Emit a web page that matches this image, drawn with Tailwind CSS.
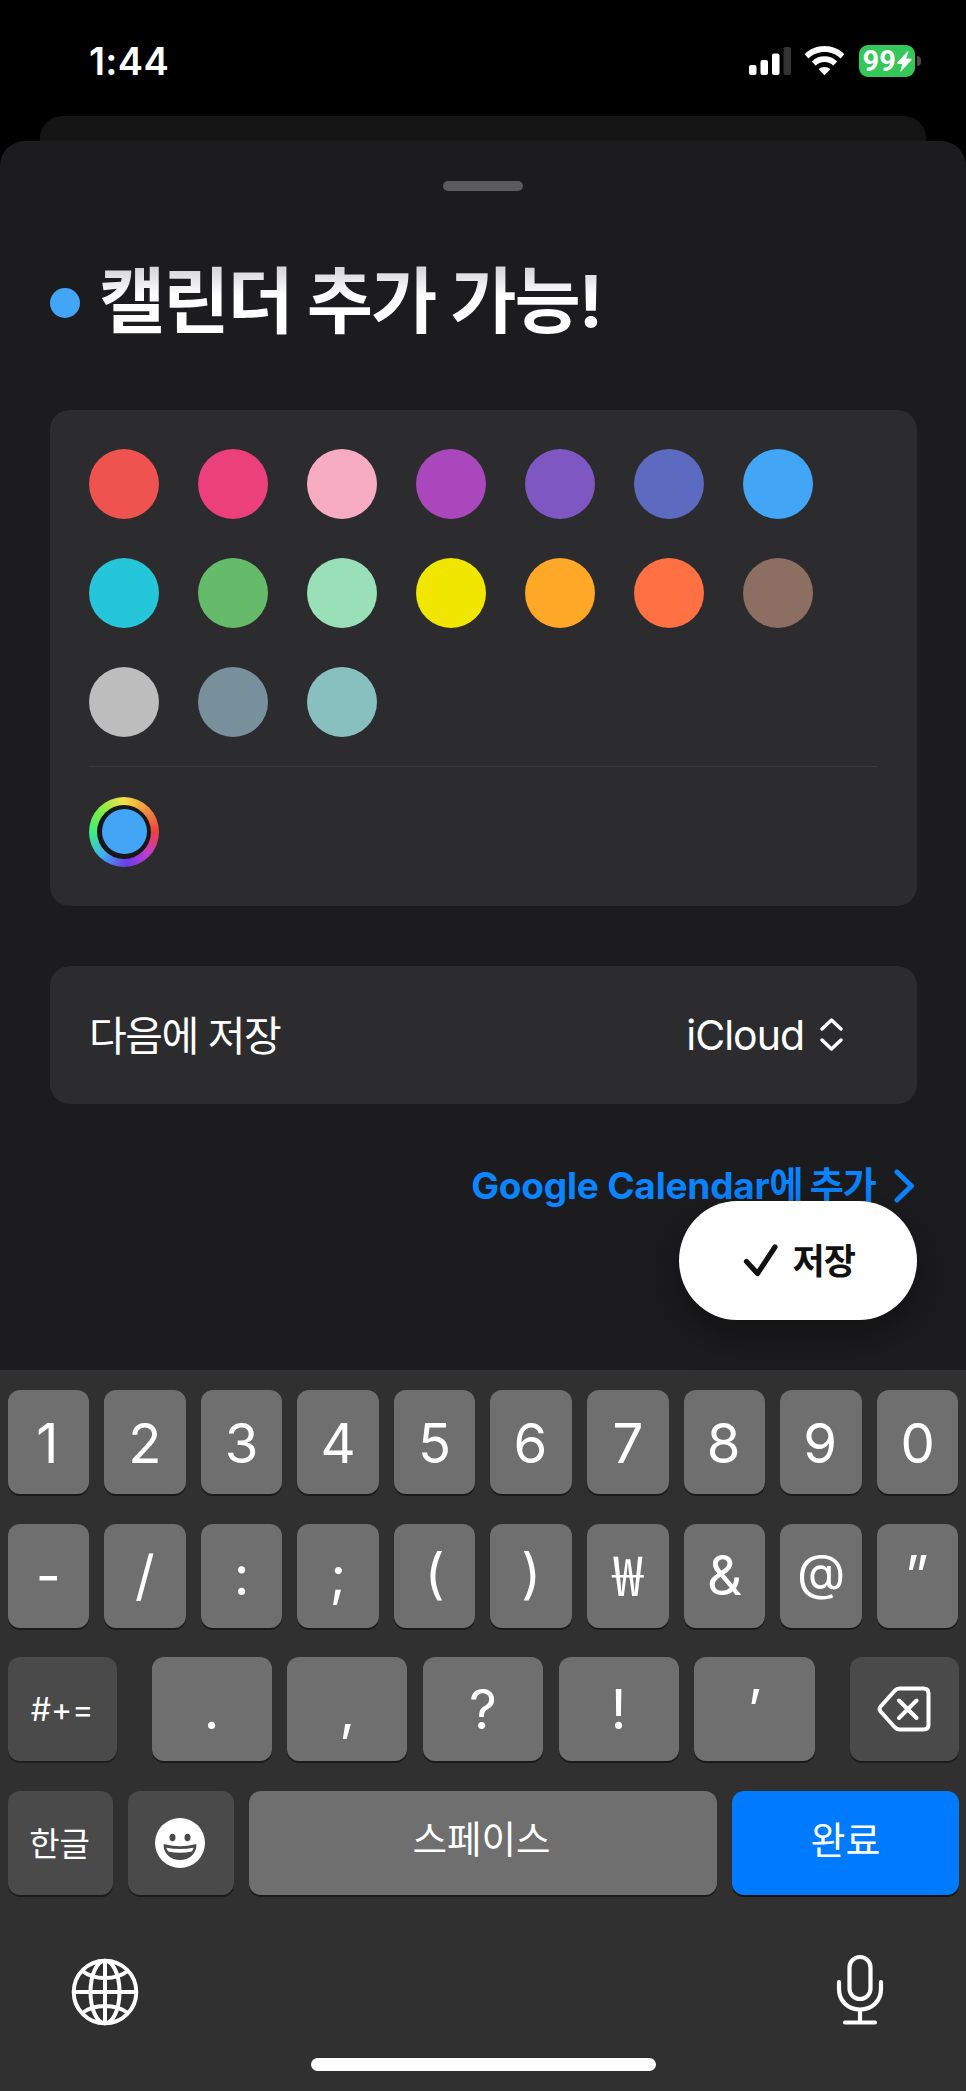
<!DOCTYPE html>
<html lang="ko">
<head>
<meta charset="utf-8">
<title>캘린더 추가</title>
<script src="https://cdn.jsdelivr.net/npm/@tailwindcss/browser@4"></script>
</head>
<body class="bg-black">
<div class="flex h-[2091px] w-[966px] flex-col overflow-hidden bg-black font-[Inter,'Noto_Sans_CJK_KR',sans-serif] text-white">

  <!-- Status bar -->
  <header class="flex h-[116px] shrink-0 items-start justify-between pr-[45px] pl-[89px]">
    <span class="mt-[43px] text-[38px] leading-[37px] font-semibold tracking-[0.3px]">1:44</span>
    <div class="mt-[45px] flex h-8 items-start">
      <svg class="mt-px h-[30px] w-[43px]" viewBox="0 0 43 30">
        <rect x="0" y="19" width="7.500" height="10" rx="2" fill="#fff"/>
        <rect x="11.500" y="14" width="7.500" height="15" rx="2" fill="#fff"/>
        <rect x="23" y="7.500" width="7.500" height="21.500" rx="2" fill="#fff"/>
        <rect x="34.500" y="1" width="7.500" height="28" rx="2" fill="#333"/>
      </svg>
      <svg class="mt-px mr-px ml-[12px] h-[30px] w-[41px]" viewBox="0 0 41 30">
        <path d="M20.500 0C28.400 0 35.300 3 40.300 8.200L36.600 12.400C32.300 8.200 26.800 5.900 20.500 5.900S8.700 8.200 4.400 12.400L.7 8.200C5.700 3 12.600 0 20.500 0Z" fill="#fff"/>
        <path d="M20.500 10.300C25.500 10.300 29.900 12.200 33.200 15.500L29.300 19.700C26.900 17.500 23.900 16.100 20.500 16.100S14.100 17.500 11.700 19.700L7.800 15.500C11.100 12.200 15.500 10.300 20.500 10.300Z" fill="#fff"/>
        <path d="M20.500 20.900C22.700 20.900 24.800 21.700 26.400 23.200L20.500 29.300L14.600 23.200C16.200 21.700 18.300 20.900 20.500 20.900Z" fill="#fff"/>
      </svg>
      <div class="ml-[13px] flex h-8 w-[56px] items-center rounded-[9px] bg-[#34c759] pl-[4px]">
        <span class="w-[34px] shrink-0 font-[Roboto] text-[29px] leading-[29px] font-bold">99</span>
        <svg class="h-[21px] w-[15px] shrink-0" viewBox="0 0 15 21" stroke="#fff" stroke-width="0.800"><path d="M11 .5L.7 11.300Q0 12.500 1.200 12.500H5.800L3.700 20.300L14 9.200Q14.800 8 13.500 8H8.700Z" fill="#fff"/></svg>
      </div>
      <div class="mt-[11px] ml-[2.500px] h-[10px] w-[4px] rounded-r-full bg-[#4a4a4a]"></div>
    </div>
  </header>
  <div class="mx-10 h-[25px] shrink-0 rounded-t-[22px] bg-[#141414]"></div>

  <!-- Sheet -->
  <main class="flex h-[1229px] shrink-0 flex-col rounded-t-[25px] bg-[#1c1c1e] px-[49.500px]">
    <div class="mt-10 h-[10px] w-20 shrink-0 self-center rounded-full bg-[#5b5b5f]"></div>

    <div class="mt-[64px] flex h-[96px] shrink-0 items-center">
      <div class="h-[30px] w-[30px] rounded-full bg-[#42a5f5]"></div>
      <h1 class="mb-[5px] ml-[19.500px] bg-linear-to-b from-[#d8d8da] from-15% to-white to-45% bg-clip-text text-[72px] leading-[90px] font-bold tracking-[-2px] text-transparent">캘린더 추가 가능!</h1>
    </div>

    <section class="mt-[58.500px] flex h-[496px] shrink-0 flex-col rounded-[20px] bg-[#2c2c2e] px-[39.500px] pt-[39px]">
      <div class="grid grid-cols-[repeat(7,70px)] gap-[39px]">
        <div class="h-[70px] rounded-full bg-[#ef5350]"></div>
        <div class="h-[70px] rounded-full bg-[#ec407a]"></div>
        <div class="h-[70px] rounded-full bg-[#f8acc4]"></div>
        <div class="h-[70px] rounded-full bg-[#ab47bc]"></div>
        <div class="h-[70px] rounded-full bg-[#7e57c2]"></div>
        <div class="h-[70px] rounded-full bg-[#5c6bc0]"></div>
        <div class="h-[70px] rounded-full bg-[#42a5f5]"></div>
        <div class="h-[70px] rounded-full bg-[#26c6da]"></div>
        <div class="h-[70px] rounded-full bg-[#66bb6a]"></div>
        <div class="h-[70px] rounded-full bg-[#99e0b9]"></div>
        <div class="h-[70px] rounded-full bg-[#f0e600]"></div>
        <div class="h-[70px] rounded-full bg-[#ffa726]"></div>
        <div class="h-[70px] rounded-full bg-[#ff7043]"></div>
        <div class="h-[70px] rounded-full bg-[#8d6e63]"></div>
        <div class="h-[70px] rounded-full bg-[#bdbdbd]"></div>
        <div class="h-[70px] rounded-full bg-[#78909c]"></div>
        <div class="h-[70px] rounded-full bg-[#88c0c0]"></div>
      </div>
      <div class="mt-[29px] h-[1.500px] bg-[#3a3a3d]"></div>
      <div class="mt-[29.500px] flex h-[70px] w-[70px] items-center justify-center rounded-full bg-[conic-gradient(#f5e04a,#f0953c_12%,#ee4040_25%,#c03bd0_37%,#6a3de8_49%,#40b0f0_62%,#3fee80_75%,#80ee40_87%,#f5e04a)]">
        <div class="flex h-[54px] w-[54px] items-center justify-center rounded-full bg-[#18181a]">
          <div class="h-[45px] w-[45px] rounded-full bg-[#42a5f5]"></div>
        </div>
      </div>
    </section>

    <section class="mt-[60px] flex h-[138px] shrink-0 items-center justify-between rounded-[20px] bg-[#2c2c2e] pr-[73.500px] pl-[39.500px]">
      <span class="mt-[2px] text-[41px] leading-[50px] tracking-[-1.500px]">다음에 저장</span>
      <span class="flex items-center text-[41px] leading-[50px] tracking-[-1px]">iCloud
        <svg class="ml-[16px] h-[33px] w-[23px]" viewBox="0 0 23 33" fill="none" stroke="#fff" stroke-width="3.400" stroke-linecap="round" stroke-linejoin="round"><path d="M2 11L11.500 2L21 11M2 22L11.500 31L21 22"/></svg>
      </span>
    </section>

    <div class="mt-[59px] flex h-[46px] shrink-0 items-center justify-end text-[#0a84ff]">
      <span class="text-[37px] leading-[46px] font-bold tracking-[-0.200px]">Google Calendar<span class="tracking-[-1.200px]">에 추가</span></span>
      <svg class="mr-[2px] ml-[18px] h-[34px] w-[21px]" viewBox="0 0 21 34" fill="none" stroke="#0a84ff" stroke-width="5" stroke-linecap="round" stroke-linejoin="round"><path d="M3 3L17.500 17L3 31"/></svg>
    </div>

    <button class="z-10 -mt-[8px] flex h-[119px] w-[238px] shrink-0 items-center self-end rounded-[58px/59.500px] bg-white pl-[64px] text-[#111] shadow-[0_14px_40px_rgba(0,0,0,0.4)]">
      <svg class="h-[34px] w-[36px]" viewBox="0 0 36 34" fill="none" stroke="#111" stroke-width="5.200" stroke-linecap="round" stroke-linejoin="round"><path d="M3.500 18.500L14.500 30.500L32 4"/></svg>
      <span class="mt-[2px] ml-[14px] text-[35px] leading-[44px] font-bold tracking-[-1px]">저장</span>
    </button>
  </main>

  <!-- Keyboard -->
  <footer class="z-20 flex h-[721px] shrink-0 flex-col bg-[#303030] px-[7.500px] pt-5 text-[54.500px] leading-none">
    <div class="grid h-[104px] shrink-0 grid-cols-10 gap-[15px]">
      <div class="flex items-center justify-center rounded-xl bg-[#6f6f6f] pt-[2px] pr-[2px] shadow-[0_2px_0_#1a1a1a]">1</div>
      <div class="flex items-center justify-center rounded-xl bg-[#6f6f6f] pt-[2px] shadow-[0_2px_0_#1a1a1a]">2</div>
      <div class="flex items-center justify-center rounded-xl bg-[#6f6f6f] pt-[2px] shadow-[0_2px_0_#1a1a1a]">3</div>
      <div class="flex items-center justify-center rounded-xl bg-[#6f6f6f] pt-[2px] shadow-[0_2px_0_#1a1a1a]">4</div>
      <div class="flex items-center justify-center rounded-xl bg-[#6f6f6f] pt-[2px] shadow-[0_2px_0_#1a1a1a]">5</div>
      <div class="flex items-center justify-center rounded-xl bg-[#6f6f6f] pt-[2px] pr-[2px] shadow-[0_2px_0_#1a1a1a]">6</div>
      <div class="flex items-center justify-center rounded-xl bg-[#6f6f6f] pt-[2px] shadow-[0_2px_0_#1a1a1a]">7</div>
      <div class="flex items-center justify-center rounded-xl bg-[#6f6f6f] pt-[2px] pr-[2px] shadow-[0_2px_0_#1a1a1a]">8</div>
      <div class="flex items-center justify-center rounded-xl bg-[#6f6f6f] pt-[2px] pr-[2px] shadow-[0_2px_0_#1a1a1a]">9</div>
      <div class="flex items-center justify-center rounded-xl bg-[#6f6f6f] pt-[2px] shadow-[0_2px_0_#1a1a1a]">0</div>
    </div>
    <div class="mt-[29.700px] grid h-[104px] shrink-0 grid-cols-10 gap-[15px]">
      <div class="flex items-center justify-center rounded-xl bg-[#6f6f6f] shadow-[0_2px_0_#1a1a1a]">-</div>
      <div class="flex items-center justify-center rounded-xl bg-[#6f6f6f] shadow-[0_2px_0_#1a1a1a]">/</div>
      <div class="flex items-center justify-center rounded-xl bg-[#6f6f6f] shadow-[0_2px_0_#1a1a1a]">:</div>
      <div class="flex items-center justify-center rounded-xl bg-[#6f6f6f] shadow-[0_2px_0_#1a1a1a]">;</div>
      <div class="flex items-center justify-center rounded-xl bg-[#6f6f6f] pb-[4px] shadow-[0_2px_0_#1a1a1a]">(</div>
      <div class="flex items-center justify-center rounded-xl bg-[#6f6f6f] pb-[4px] shadow-[0_2px_0_#1a1a1a]">)</div>
      <div class="flex items-center justify-center rounded-xl bg-[#6f6f6f] pb-[5px] shadow-[0_2px_0_#1a1a1a]"><span class="font-['Noto_Sans_CJK_KR']">₩</span></div>
      <div class="flex items-center justify-center rounded-xl bg-[#6f6f6f] shadow-[0_2px_0_#1a1a1a]">&amp;</div>
      <div class="flex items-center justify-center rounded-xl bg-[#6f6f6f] pb-[7px] shadow-[0_2px_0_#1a1a1a]"><span class="text-[50px]">@</span></div>
      <div class="flex items-center justify-center rounded-xl bg-[#6f6f6f] pr-[2px] shadow-[0_2px_0_#1a1a1a]">”</div>
    </div>
    <div class="mt-[29.700px] flex h-[104px] shrink-0 gap-[15.500px]">
      <div class="mr-[19.500px] flex w-[109px] items-center justify-center rounded-xl bg-[#4a4a4a] pt-px text-[32px] shadow-[0_2px_0_#1d1d1d]">#+=</div>
      <div class="flex flex-1 items-center justify-center rounded-xl bg-[#6f6f6f] shadow-[0_2px_0_#1a1a1a]">.</div>
      <div class="flex flex-1 items-center justify-center rounded-xl bg-[#6f6f6f] shadow-[0_2px_0_#1a1a1a]">,</div>
      <div class="flex flex-1 items-center justify-center rounded-xl bg-[#6f6f6f] shadow-[0_2px_0_#1a1a1a]">?</div>
      <div class="flex flex-1 items-center justify-center rounded-xl bg-[#6f6f6f] shadow-[0_2px_0_#1a1a1a]">!</div>
      <div class="flex flex-1 items-center justify-center rounded-xl bg-[#6f6f6f] shadow-[0_2px_0_#1a1a1a]">’</div>
      <div class="ml-[19.500px] flex w-[109px] items-center justify-center rounded-xl bg-[#4a4a4a] shadow-[0_2px_0_#1d1d1d]">
        <svg class="h-[46px] w-[54px]" viewBox="0 0 54 46" fill="none" stroke="#fff" stroke-width="4" stroke-linecap="round" stroke-linejoin="round"><path d="M22.500 2.500H46.500Q51.500 2.500 51.500 7.500V38.500Q51.500 43.500 46.500 43.500H22.500Q20 43.500 18 41.500L3.600 25.500Q1.500 23 3.600 20.500L18 4.500Q20 2.500 22.500 2.500ZM22 14.500L39.500 32M39.500 14.500L22 32"/></svg>
      </div>
    </div>
    <div class="mt-[29.700px] flex h-[104px] shrink-0 gap-[15px]">
      <div class="flex w-[105px] items-center justify-center rounded-xl bg-[#4a4a4a] pt-[2px] pr-px text-[33px] shadow-[0_2px_0_#1a1a1a]">한글</div>
      <div class="flex w-[106px] items-center justify-center rounded-xl bg-[#4a4a4a] pr-[2px] shadow-[0_2px_0_#1a1a1a]">
        <svg class="h-[50px] w-[50px]" viewBox="0 0 50 50"><circle cx="25" cy="25" r="25" fill="#fff"/><ellipse cx="17.500" cy="19.500" rx="3" ry="3.800" fill="#4a4a4a"/><ellipse cx="32.500" cy="19.500" rx="3" ry="3.800" fill="#4a4a4a"/><path d="M8.500 27.200Q8.500 26 9.800 26.300Q25 30 40.200 26.300Q41.500 26 41.500 27.200C41 36 34 42 25 42S9 36 8.500 27.200Z" fill="#4a4a4a"/><path d="M11.300 29.700Q25 32.500 38.700 29.700Q38.200 32 36.800 33.500Q25 36 13.200 33.500Q11.800 32 11.300 29.700Z" fill="#fff"/></svg>
      </div>
      <div class="flex flex-1 items-center justify-center rounded-xl bg-[#6f6f6f] pr-[2px] pb-[7px] text-[37.500px] shadow-[0_2px_0_#1a1a1a]">스페이스</div>
      <div class="flex w-[227px] items-center justify-center rounded-xl bg-[#007aff] pb-[7px] pl-px text-[38px] shadow-[0_2px_0_#1a1208]">완료</div>
    </div>
    <div class="mt-[58px] flex h-[74px] shrink-0 items-center justify-between pr-[74px] pl-[63px]">
      <svg class="mt-[4px] h-[68px] w-[68px]" viewBox="0 0 68 68" fill="none" stroke="#fff" stroke-width="4"><circle cx="34" cy="34" r="31.300"/><ellipse cx="34" cy="34" rx="14.500" ry="31.300"/><path d="M34 2.700V65.300M2.700 34H65.300M11.500 13Q20 20 34 20T56.500 13M11.500 55Q20 48 34 48T56.500 55"/></svg>
      <svg class="h-[72px] w-[50px]" viewBox="0 0 50 72" fill="none" stroke="#fff" stroke-width="4.200" stroke-linecap="round"><rect x="14.500" y="3" width="21" height="42" rx="10.500"/><path d="M4 28V35C4 47 13 55.500 25 55.500S46 47 46 35V28M25 55.500V68.500M10 68.500H40"/></svg>
    </div>
    <div class="mt-[31px] h-[12.500px] w-[345px] shrink-0 self-center rounded-full bg-white"></div>
  </footer>
</div>
</body>
</html>
